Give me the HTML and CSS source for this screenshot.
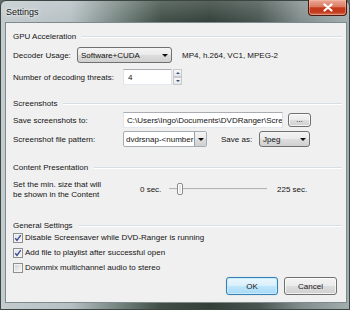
FILE: index.html
```html
<!DOCTYPE html>
<html>
<head>
<meta charset="utf-8">
<title>Settings</title>
<link rel="stylesheet" href="styles.css">
</head>
<body>
<div class="window">
  <div class="titlebar">
    <span class="title">Settings</span>
    <div class="close"><svg width="12" height="9" viewBox="0 0 12 9"><path d="M2.5 1.5 L9.5 7.5 M9.5 1.5 L2.5 7.5" stroke="#fff" stroke-width="2.2" stroke-linecap="round"/></svg></div>
  </div>
  <div class="client">
    <div class="ghead g-gpu"><span>GPU Acceleration</span><i></i></div>
    <div class="row r-decoder">
      <span class="lbl lbl-short">Decoder Usage:</span>
      <div class="combo w-decoder"><span>Software+CUDA</span><b></b></div>
      <span class="hint">MP4, h.264, VC1, MPEG-2</span>
    </div>
    <div class="row r-threads">
      <span class="lbl">Number of decoding threats:</span>
      <div class="textbox w-threads">4</div>
      <div class="spin"><span class="up"></span><span class="dn"></span></div>
    </div>

    <div class="ghead g-shots"><span>Screenshots</span><i></i></div>
    <div class="row r-save">
      <span class="lbl">Save screenshots to:</span>
      <div class="textbox w-path"><span>C:\Users\Ingo\Documents\DVDRanger\Scree</span></div>
      <div class="btn btn-browse">...</div>
    </div>
    <div class="row r-pattern">
      <span class="lbl">Screenshot file pattern:</span>
      <div class="combo combo-edit w-pattern"><span>dvdrsnap-&lt;number</span><b></b></div>
      <span class="lbl-saveas">Save as:</span>
      <div class="combo w-jpeg"><span>Jpeg</span><b></b></div>
    </div>

    <div class="ghead g-content"><span>Content Presentation</span><i></i></div>
    <div class="row r-slider">
      <span class="lbl-slider">Set the min. size that will<br>be shown in the Content</span>
      <span class="smin">0 sec.</span>
      <div class="slider"><div class="track"></div><div class="thumb"></div></div>
      <span class="smax">225 sec.</span>
    </div>

    <div class="ghead g-general"><span>General Settings</span><i></i></div>
    <div class="cb"><span class="box checked"><svg width="8" height="8" viewBox="0 0 8 8"><path d="M1.2 4.2 L3 6.3 L6.8 1.2" fill="none" stroke="#3b4f8c" stroke-width="1.4"/></svg></span><span>Disable Screensaver while DVD-Ranger is running</span></div>
    <div class="cb"><span class="box checked"><svg width="8" height="8" viewBox="0 0 8 8"><path d="M1.2 4.2 L3 6.3 L6.8 1.2" fill="none" stroke="#3b4f8c" stroke-width="1.4"/></svg></span><span>Add file to playlist after successful open</span></div>
    <div class="cb"><span class="box"></span><span>Downmix multichannel audio to stereo</span></div>

    <div class="buttons">
      <div class="btn btn-ok">OK</div>
      <div class="btn btn-cancel">Cancel</div>
    </div>
  </div>
</div>
</body>
</html>
```
FILE: styles.css
```css
* { box-sizing: border-box; margin: 0; padding: 0; }
html, body { width: 350px; height: 310px; overflow: hidden; }
body {
  background: #5f6d69;
  font-family: "Liberation Sans", Arial, sans-serif;
  font-size: 8px;
  color: #141414;
}
.window {
  width: 350px;
  height: 310px;
  display: flex;
  flex-direction: column;
  padding: 0 2px 6px 4px;
  border: 1px solid #3b4642;
  border-radius: 6px 6px 0 0;
  background:
    linear-gradient(180deg, rgba(255,255,255,0.18) 0%, rgba(255,255,255,0) 22px),
    linear-gradient(90deg, #c3cbcf 0%, #b6c0c4 20%, #74837e 34%, #3f4d46 46%, #33403a 60%, #47544f 74%, #808c8b 86%, #a3adae 100%);
}
.titlebar {
  height: 21px;
  display: flex;
  align-items: flex-start;
}
.title {
  font-size: 9px;
  color: #111;
  line-height: 22px;
  padding-left: 1px;
  text-shadow: 0 0 5px rgba(255,255,255,0.95), 0 0 2px rgba(255,255,255,0.9);
}
.close {
  margin-left: auto;
  margin-top: -1px;
  width: 39px;
  height: 16px;
  border: 1px solid #4a1a10;
  border-top: 0;
  border-radius: 0 0 4px 4px;
  background: linear-gradient(180deg, #e9a896 0%, #dc7a63 45%, #c5391b 52%, #c23a1d 80%, #d8745a 100%);
  box-shadow: inset 0 0 0 1px rgba(255,200,180,0.45);
  display: flex;
  align-items: center;
  justify-content: center;
}
.client {
  flex: 1;
  background: #f0f0f0;
  border: 1px solid #7d8b8d;
  padding: 8px 4px 7px 7px;
  display: flex;
  flex-direction: column;
}
.ghead {
  display: flex;
  align-items: center;
  height: 12px;
  line-height: 12px;
}
.ghead i {
  flex: 1;
  height: 2px;
  margin-left: 6px;
  border-top: 1px solid #d5dfe5;
  border-bottom: 1px solid #ffffff;
}
.g-shots { margin-top: 13px; }
.g-content { margin-top: 15px; }
.g-general { margin-top: 21px; height: 10px; line-height: 10px; }

.row {
  display: flex;
  align-items: center;
  height: 16px;
  white-space: nowrap;
}
.r-decoder { margin-top: 4px; }
.r-threads { margin-top: 6px; }
.r-save { margin-top: 2px; }
.r-pattern { margin-top: 3px; }
.r-slider { margin-top: 4px; height: 22px; }

.lbl { width: 110px; flex: none; }
.lbl-short { width: 64px; }

.combo {
  display: flex;
  align-items: center;
  height: 16px;
  border: 1px solid #707070;
  border-radius: 3px;
  background: linear-gradient(180deg, #f4f4f4 0%, #ebebeb 48%, #dddddd 52%, #d0d0d0 100%);
  padding-left: 3px;
  overflow: hidden;
  flex: none;
}
.combo span {
  flex: 1;
  overflow: hidden;
  white-space: nowrap;
}
.combo b {
  width: 12px;
  height: 100%;
  flex: none;
  display: flex;
  align-items: center;
  justify-content: center;
}
.combo b::before {
  content: "";
  border-left: 3px solid transparent;
  border-right: 3px solid transparent;
  border-top: 3px solid #111;
}
.combo-edit {
  background: #ffffff;
  border-color: #a5acb5;
  border-radius: 2px;
}
.combo-edit b {
  background: linear-gradient(180deg, #f4f4f4 0%, #ebebeb 48%, #dddddd 52%, #d0d0d0 100%);
  border-left: 1px solid #9aa0a8;
}
.w-decoder { width: 95px; }
.w-pattern { width: 84px; padding-left: 2px; }
.w-jpeg { width: 51px; }

.hint { margin-left: 10px; }

.textbox {
  height: 16px;
  background: #ffffff;
  border: 1px solid #abadb3;
  border-color: #abadb3 #dbdfe6 #e3e9ef #e2e3ea;
  padding-left: 3px;
  display: flex;
  align-items: center;
  overflow: hidden;
  white-space: nowrap;
  flex: none;
}
.w-threads { width: 49px; padding-left: 4px; }
.w-path { width: 160px; padding-left: 3px; }

.spin {
  width: 9px;
  height: 16px;
  margin-left: 1px;
  display: flex;
  flex-direction: column;
  flex: none;
}
.spin span {
  flex: 1;
  border: 1px solid #c6cad0;
  background: linear-gradient(180deg, #f7f7f7, #e6e6e6);
  display: flex;
  align-items: center;
  justify-content: center;
}
.spin .up::before {
  content: "";
  border-left: 2px solid transparent;
  border-right: 2px solid transparent;
  border-bottom: 2px solid #3d5077;
}
.spin .dn::before {
  content: "";
  border-left: 2px solid transparent;
  border-right: 2px solid transparent;
  border-top: 2px solid #3d5077;
}

.btn {
  display: flex;
  align-items: center;
  justify-content: center;
  border: 1px solid #707070;
  border-radius: 3px;
  background: linear-gradient(180deg, #f4f4f4 0%, #ebebeb 48%, #dddddd 52%, #d0d0d0 100%);
  box-shadow: inset 0 0 0 1px rgba(255,255,255,0.7);
  flex: none;
}
.btn-browse {
  width: 23px;
  height: 14px;
  margin-left: 5px;
  line-height: 10px;
}
.lbl-saveas { margin-left: 14px; width: 38px; flex: none; }

.lbl-slider {
  width: 127px;
  line-height: 10px;
  flex: none;
  padding-top: 1px;
}
.smin { width: 22px; flex: none; }
.slider {
  position: relative;
  width: 98px;
  height: 14px;
  margin-left: 7px;
  flex: none;
}
.track {
  position: absolute;
  left: 0;
  right: 0;
  top: 6px;
  height: 2px;
  background: #e7eaea;
  border-top: 1px solid #b4b4b4;
}
.thumb {
  position: absolute;
  left: 8px;
  top: 1px;
  width: 6px;
  height: 12px;
  border: 1px solid #8a8a8a;
  border-radius: 2px;
  background: linear-gradient(90deg, #f5f5f5, #dcdcdc);
  box-shadow: inset 0 0 0 1px #fff;
}
.smax { margin-left: 10px; }

.cb {
  display: flex;
  align-items: flex-start;
  height: 15px;
  padding-top: 2px;
  white-space: nowrap;
}
.cb span:last-child { line-height: 10px; }
.box {
  width: 10px;
  height: 10px;
  border: 1px solid #8e8f8f;
  background: linear-gradient(135deg, #c9cdd2 0%, #eef0f1 70%, #ffffff 100%);
  box-shadow: inset 0 0 0 1px #f4f4f4;
  margin-right: 2px;
  display: flex;
  align-items: center;
  justify-content: center;
  flex: none;
}
.box.checked { background: linear-gradient(135deg, #dfe2e6 0%, #f6f7f8 100%); }

.buttons {
  margin-top: auto;
  display: flex;
  justify-content: flex-end;
  gap: 6px;
  padding-right: 5px;
}
.btn-ok, .btn-cancel { height: 18px; }
.btn-ok {
  width: 52px;
  border-color: #3c7fb1;
  background: linear-gradient(180deg, #eaf6fd 0%, #d9f0fc 48%, #bee6fd 52%, #a7d9f5 100%);
  box-shadow: inset 0 0 0 1px #c4ecfc, 0 0 1px #7fc3ea;
}
.btn-cancel { width: 53px; }
```
